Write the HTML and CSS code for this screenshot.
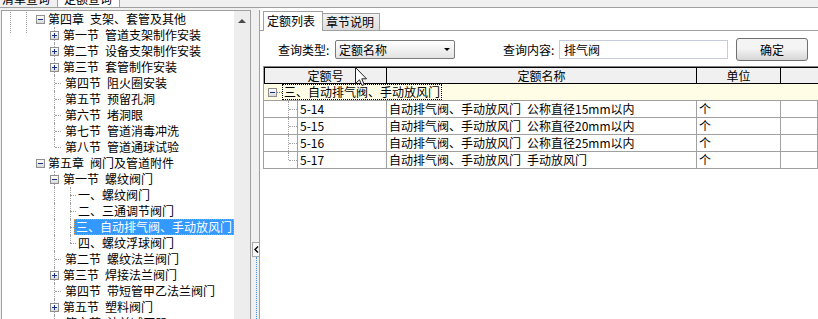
FILE: index.html
```html
<!DOCTYPE html>
<html lang="zh-CN">
<head>
  <meta charset="UTF-8" />
  <title>定额查询</title>
  <link rel="stylesheet" href="styles.css">
</head>
<body>
  <div class="topbar">
    <div class="ttab">清单查询</div>
    <div class="ttab on">定额查询</div>
  </div>

  <div class="main">
    <!-- chapter tree -->
    <div class="left">
      <div class="tree">
        <div class="node l1 root"><span class="box"></span><span class="label">第四章&ensp;支架、套管及其他</span></div>
        <div class="node l2 g54"><span class="box plus"></span><span class="label">第一节&ensp;管道支架制作安装</span></div>
        <div class="node l2 g54"><span class="box plus"></span><span class="label">第二节&ensp;设备支架制作安装</span></div>
        <div class="node l2 g54"><span class="box plus"></span><span class="label">第三节&ensp;套管制作安装</span></div>
        <div class="node l2 g54"><span class="stub"></span><span class="label">第四节&ensp;阻火圈安装</span></div>
        <div class="node l2 g54"><span class="stub"></span><span class="label">第五节&ensp;预留孔洞</span></div>
        <div class="node l2 g54"><span class="stub"></span><span class="label">第六节&ensp;堵洞眼</span></div>
        <div class="node l2 g54"><span class="stub"></span><span class="label">第七节&ensp;管道消毒冲洗</span></div>
        <div class="node l2 g54h"><span class="stub"></span><span class="label">第八节&ensp;管道通球试验</span></div>
        <div class="node l1"><span class="box"></span><span class="label">第五章&ensp;阀门及管道附件</span></div>
        <div class="node l2 g54"><span class="box"></span><span class="label">第一节&ensp;螺纹阀门</span></div>
        <div class="node l3 g54 g70"><span class="stub"></span><span class="label">一、螺纹阀门</span></div>
        <div class="node l3 g54 g70"><span class="stub"></span><span class="label">二、三通调节阀门</span></div>
        <div class="node l3 g54 g70"><span class="stub"></span><span class="label sel">三、自动排气阀、手动放风门</span></div>
        <div class="node l3 g54 g70h"><span class="stub"></span><span class="label">四、螺纹浮球阀门</span></div>
        <div class="node l2 g54"><span class="stub"></span><span class="label">第二节&ensp;螺纹法兰阀门</span></div>
        <div class="node l2 g54"><span class="box plus"></span><span class="label">第三节&ensp;焊接法兰阀门</span></div>
        <div class="node l2 g54"><span class="stub"></span><span class="label">第四节&ensp;带短管甲乙法兰阀门</span></div>
        <div class="node l2 g54"><span class="box plus"></span><span class="label">第五节&ensp;塑料阀门</span></div>
        <div class="node l2 g54"><span class="stub"></span><span class="label">第六节&ensp;法兰减压器</span></div>
      </div>
      <div class="vscroll"><span class="up"></span></div>
    </div>

    <div class="splitter">
      <div class="sbtn">
        <svg width="5" height="7" viewBox="0 0 5 7"><path d="M4 0.5 L1 3.5 L4 6.5" fill="none" stroke="#000" stroke-width="1.4"/></svg>
      </div>
      <div class="sline"></div>
    </div>

    <!-- quota list -->
    <div class="right">
      <div class="rpanel">
        <div class="tabs">
          <div class="tab on">定额列表</div>
          <div class="tab">章节说明</div>
        </div>

        <div class="query">
          <span class="qlabel">查询类型:</span>
          <div class="select"><span>定额名称</span><span class="arrow"></span></div>
          <span class="qlabel second">查询内容:</span>
          <div class="input">排气阀</div>
          <div class="btn">确定</div>
        </div>

        <div class="grid">
          <div class="ghead">
            <div class="hc c1">定额号</div>
            <div class="hc c2">定额名称</div>
            <div class="hc c3">单位</div>
            <div class="hc c4"></div>
          </div>
          <div class="group">
            <span class="box"></span><span class="gstub"></span><span class="glabel">三、自动排气阀、手动放风门</span>
          </div>
          <div class="row">
            <div class="lead"></div>
            <div class="cell c1">5-14</div>
            <div class="cell c2">自动排气阀、手动放风门&ensp;公称直径15mm以内</div>
            <div class="cell c3">个</div>
            <div class="cell c4"></div>
          </div>
          <div class="row">
            <div class="lead"></div>
            <div class="cell c1">5-15</div>
            <div class="cell c2">自动排气阀、手动放风门&ensp;公称直径20mm以内</div>
            <div class="cell c3">个</div>
            <div class="cell c4"></div>
          </div>
          <div class="row">
            <div class="lead"></div>
            <div class="cell c1">5-16</div>
            <div class="cell c2">自动排气阀、手动放风门&ensp;公称直径25mm以内</div>
            <div class="cell c3">个</div>
            <div class="cell c4"></div>
          </div>
          <div class="row last">
            <div class="lead"></div>
            <div class="cell c1">5-17</div>
            <div class="cell c2">自动排气阀、手动放风门&ensp;手动放风门</div>
            <div class="cell c3">个</div>
            <div class="cell c4"></div>
          </div>
        </div>

        <svg class="cursor" width="13" height="20" viewBox="0 0 13 20">
          <path d="M0.5 0.5 V16.5 L4.5 12.8 L7 18.5 L9.2 17.5 L6.8 11.8 H11.5 Z" fill="#fff" stroke="#222" stroke-width="1"/>
        </svg>
      </div>
    </div>
  </div>
</body>
</html>
```

FILE: styles.css
```css
* {
  box-sizing: border-box;
}

body {
  margin: 0;
  width: 818px;
  height: 319px;
  overflow: hidden;
  background: #f0f0f0;
  color: #000;
  font-family: "Noto Sans CJK SC", "Noto Sans", sans-serif;
  font-size: 12px;
}

/* top tabs, mostly scrolled away */
.topbar {
  display: flex;
  height: 8px;
  overflow: hidden;
  border-bottom: 1px solid #a0a0a0;
}

.ttab {
  margin-top: -9px;
  height: 17px;
  line-height: 16px;
  padding: 0 2px;
  width: 58px;
  border-right: 1px solid #a0a0a0;
  white-space: nowrap;
}

.ttab.on {
  width: 62px;
  padding-left: 6px;
  background: #fff;
}

.main {
  display: flex;
  height: 311px;
}

/* left tree */
.left {
  display: flex;
  width: 250px;
  margin: 2px 0 0 1px;
  border: 1px solid #a0a0a0;
  border-bottom: none;
  background: #fff;
}

.tree {
  width: 232px;
  overflow: hidden;
}

.node {
  position: relative;
  display: flex;
  align-items: center;
  height: 16px;
  white-space: nowrap;
}

.node.l1 {
  padding-left: 34px;
}

.node.l2,
.node.l3 {
  padding-left: 48px;
}

.label {
  padding: 0 2px;
  line-height: 16px;
  height: 16px;
}

.l1 .label {
  margin-left: 1px;
}

.l2 .box + .label {
  margin-left: 2px;
}

.sel {
  background: #3399ff;
  color: #fff;
  outline: 1px dotted #e89a3c;
  outline-offset: -1px;
}

.stub {
  height: 0;
  border-top: 1px dotted #a0a0a0;
}

.l2 .stub {
  width: 6px;
  margin-left: 5px;
  margin-right: 2px;
}

.l3 .stub {
  width: 6px;
  margin-left: 20px;
}

.box {
  position: relative;
  z-index: 1;
  width: 9px;
  height: 9px;
  border: 1px solid #8f8f8f;
  background: linear-gradient(#ffffff, #d9d9d9);
}

.box::before {
  content: "";
  position: absolute;
  left: 1px;
  top: 3px;
  width: 5px;
  height: 1px;
  background: #1c2f86;
}

.box.plus::after {
  content: "";
  position: absolute;
  left: 3px;
  top: 1px;
  width: 1px;
  height: 5px;
  background: #1c2f86;
}

/* tree guide lines */
.g54::before,
.g54h::before,
.g70::after,
.g70h::after,
.root::before,
.root::after {
  content: "";
  position: absolute;
  top: 0;
  bottom: 0;
  border-left: 1px dotted #a0a0a0;
}

.g54::before,
.g54h::before {
  left: 52px;
}

.g54h::before {
  bottom: 8px;
}

.g70::after,
.g70h::after {
  left: 68px;
}

.g70h::after {
  bottom: 8px;
}

.root::before {
  left: 8px;
  bottom: -6px;
  top: -1px;
}

.root::after {
  left: 24px;
  bottom: -6px;
  top: -1px;
}

.vscroll {
  width: 16px;
  background: #ededed;
  display: flex;
  justify-content: center;
}

.up {
  margin-top: 8px;
  width: 0;
  height: 0;
  border-left: 4px solid transparent;
  border-right: 4px solid transparent;
  border-bottom: 4px solid #4a4a4a;
}

/* splitter */
.splitter {
  width: 8px;
  display: flex;
  flex-direction: column;
}

.sbtn {
  margin-top: 234px;
  margin-left: 1px;
  width: 7px;
  height: 15px;
  border: 1px solid #a8a8a8;
  border-right: none;
  background: #f8f8f8;
  display: flex;
  align-items: center;
  justify-content: center;
}

.sline {
  flex: 1;
  margin-left: 5px;
  border-left: 1px dotted #4f8de0;
}

/* right panel */
.right {
  flex: 1;
  padding-top: 2px;
  background: #fff;
}

.rpanel {
  position: relative;
  height: 100%;
  border-left: 1px solid #a0a0a0;
}

.tabs {
  display: flex;
  align-items: flex-end;
  height: 21px;
  padding-left: 3px;
  border-bottom: 1px solid #a0a0a0;
}

.tab {
  height: 17px;
  line-height: 15px;
  width: 58px;
  padding-left: 3px;
  border: 1px solid #a0a0a0;
  border-bottom: none;
  background: linear-gradient(#f2f2f2, #dedede);
  white-space: nowrap;
}

.tab.on {
  height: 20px;
  width: 60px;
  line-height: 18px;
  margin-bottom: -1px;
  background: #fff;
}

.tab + .tab {
  margin-left: -1px;
}

.query {
  display: flex;
  align-items: center;
  height: 23px;
  margin-top: 7px;
  padding-left: 18px;
}

.qlabel {
  width: 57px;
  white-space: nowrap;
}

.qlabel.second {
  margin-left: 48px;
  width: 56px;
}

.select {
  display: flex;
  align-items: center;
  justify-content: space-between;
  width: 120px;
  height: 19px;
  padding: 0 4px 0 3px;
  border: 1px solid #7a7a7a;
  border-radius: 2px;
  background: linear-gradient(#ffffff, #e3e3e3);
}

.arrow {
  width: 0;
  height: 0;
  border-left: 3px solid transparent;
  border-right: 3px solid transparent;
  border-top: 3px solid #000;
}

.input {
  width: 169px;
  height: 19px;
  line-height: 17px;
  padding-left: 4px;
  border: 1px solid #c5cbd8;
  background: #fff;
}

.btn {
  width: 72px;
  height: 23px;
  line-height: 21px;
  margin-left: 8px;
  text-align: center;
  border: 1px solid #707070;
  border-radius: 3px;
  background: linear-gradient(#f4f4f4 45%, #d6d6d6);
}

/* result grid */
.grid {
  margin: 5px 0 0 3px;
  border-left: 1px solid #a0a0a0;
  border-top: 1px solid #808080;
  border-bottom: 1px solid #a0a0a0;
}

.ghead {
  display: flex;
  height: 17px;
  border-top: 1px solid #000;
  border-bottom: 1px solid #000;
  border-left: 1px solid #000;
  background: #f0f0f0;
}

.hc {
  line-height: 15px;
  text-align: center;
  border-right: 1px solid #000;
}

.ghead .c1 {
  width: 122px;
}

.c2 {
  width: 310px;
}

.c3 {
  width: 84px;
}

.c4 {
  flex: 1;
  border-right: none;
}

.group {
  display: flex;
  align-items: center;
  height: 17px;
  padding-left: 4px;
  border-bottom: 1px solid #a0a0a0;
  background: #fffde6;
}

.gstub {
  width: 5px;
  border-top: 1px dotted #808080;
}

.glabel {
  height: 16px;
  line-height: 14px;
  padding: 0 1px;
  border: 1px dotted #000;
}

.row {
  display: flex;
  height: 17px;
  border-bottom: 1px solid #a0a0a0;
}

.row.last {
  border-bottom: none;
  height: 16px;
}

.lead {
  position: relative;
  width: 33px;
}

.lead::before {
  content: "";
  position: absolute;
  left: 24px;
  top: 0;
  bottom: 0;
  border-left: 1px dotted #a0a0a0;
}

.lead::after {
  content: "";
  position: absolute;
  left: 25px;
  top: 8px;
  width: 8px;
  border-top: 1px dotted #a0a0a0;
}

.last .lead::before {
  bottom: 8px;
}

.cell {
  line-height: 16px;
  padding-left: 2px;
  border-right: 1px solid #a0a0a0;
  white-space: nowrap;
  overflow: hidden;
}

.row .c1 {
  width: 90px;
  border-left: 1px solid #a0a0a0;
}

.cursor {
  position: absolute;
  left: 95px;
  top: 57px;
}
```
